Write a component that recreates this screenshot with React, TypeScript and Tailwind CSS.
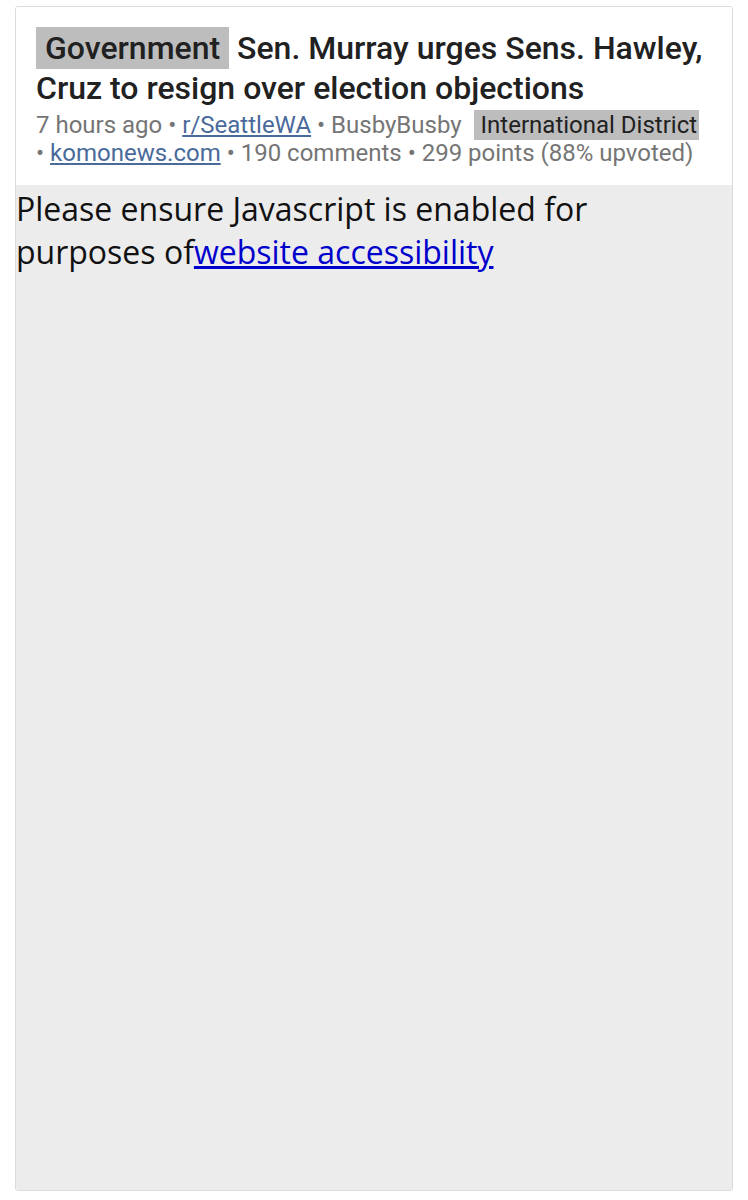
export default function App() {
  return (
    <div className="min-h-[1200px] bg-white pt-[6px] px-[15px] pb-[9px]">
      <div className="flex h-[1185px] flex-col overflow-hidden rounded-[3px] border border-[#dcdcdc]">
        <header className="bg-white px-[20px] pt-[21px] pb-[18px] font-['Roboto',sans-serif]">
          <h1 className="text-[32px] leading-[40px] font-medium text-[#212121]">
            <span className="bg-[#bdbdbd] px-[9px] py-[2px]">Government</span>{" "}
            Sen. Murray urges Sens. Hawley, Cruz to resign over election objections
          </h1>
          <p className="mt-[3px] text-[24px] leading-[28px] text-[#757575]">
            7 hours ago •{" "}
            <a href="#" className="text-[#4a6a9b] underline">r/SeattleWA</a> • BusbyBusby{" "}
            <span className="ml-[6px] bg-[#bdbdbd] pl-[7px] pr-[2px] py-[1px] text-[#212121]">International District</span>{" "}
            • <a href="#" className="text-[#4a6a9b] underline">komonews.com</a> • 190 comments • 299 points (88% upvoted)
          </p>
        </header>
        <main className="flex-1 bg-[#ececec] pt-[2px] font-['Open_Sans',sans-serif] text-[32px] leading-[43px] text-[#111]">
          <p>
            Please ensure Javascript is enabled for purposes of
            <a href="#" className="text-[#0000cc] underline">website accessibility</a>
          </p>
        </main>
      </div>
    </div>
  )
}
